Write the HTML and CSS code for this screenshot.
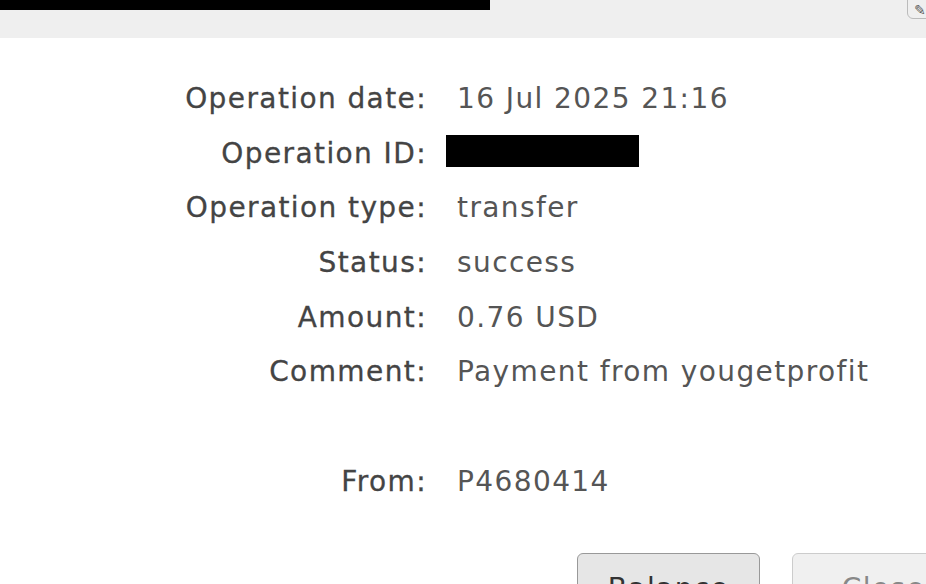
FILE: index.html
```html
<!DOCTYPE html>
<html lang="en">
<head>
  <meta charset="UTF-8">
  <title>Operation details</title>
  <link rel="stylesheet" href="styles.css">
</head>
<body>
  <div class="topbar">
    <div class="hidden-title"></div>
    <button class="corner-btn">&#9998;</button>
  </div>

  <div class="details">
    <div class="label">Operation date:</div>
    <div class="value">16 Jul 2025 21:16</div>

    <div class="label">Operation ID:</div>
    <div class="value"><span class="redacted"></span></div>

    <div class="label">Operation type:</div>
    <div class="value">transfer</div>

    <div class="label">Status:</div>
    <div class="value">success</div>

    <div class="label">Amount:</div>
    <div class="value">0.76 USD</div>

    <div class="label">Comment:</div>
    <div class="value">Payment from yougetprofit</div>

    <div class="label"></div>
    <div class="value"></div>

    <div class="label">From:</div>
    <div class="value">P4680414</div>
  </div>

  <div class="actions">
    <button class="btn">Balance</button>
    <button class="btn btn-light">Close</button>
  </div>
</body>
</html>
```

FILE: styles.css
```css
body {
  margin: 0;
  font-family: "DejaVu Sans", Arial, sans-serif;
  color: #444;
  background-color: #fff;
  overflow: hidden;
}
.topbar {
  height: 38px;
  background-color: #efefef;
  position: relative;
}
.hidden-title {
  width: 490px;
  height: 10px;
  background-color: #000;
}
.corner-btn {
  position: absolute;
  top: -10px;
  left: 907px;
  width: 40px;
  height: 29px;
  border: 1px solid #bbb;
  border-radius: 6px;
  background-color: #efefef;
  color: #555;
  font-size: 14px;
  padding: 10px 0 0 6px;
  text-align: left;
}
.details {
  display: grid;
  grid-template-columns: 427px auto;
  column-gap: 30px;
  margin-top: 34px;
  font-size: 28px;
  letter-spacing: 1.4px;
}
.label,
.value {
  height: 54.7px;
  line-height: 54.7px;
  white-space: nowrap;
}
.label {
  text-align: right;
  color: #444;
  -webkit-text-stroke: 0.3px #444;
}
.value {
  color: #555;
}
.redacted {
  display: inline-block;
  width: 193px;
  height: 32px;
  background-color: #000;
  margin-left: -11px;
  vertical-align: -4px;
}
.actions {
  display: flex;
  gap: 32px;
  margin-top: 43px;
  padding-left: 577px;
}
.btn {
  flex-shrink: 0;
  width: 183px;
  height: 70px;
  font-family: "DejaVu Sans", Arial, sans-serif;
  font-size: 28px;
  letter-spacing: 1.4px;
  color: #333;
  background-color: #e6e6e6;
  border: 1px solid #999;
  border-radius: 6px;
  padding: 0;
  line-height: 70px;
}
.btn-light {
  background-color: #f0f0f0;
  border-color: #ccc;
  color: #888;
}
```
